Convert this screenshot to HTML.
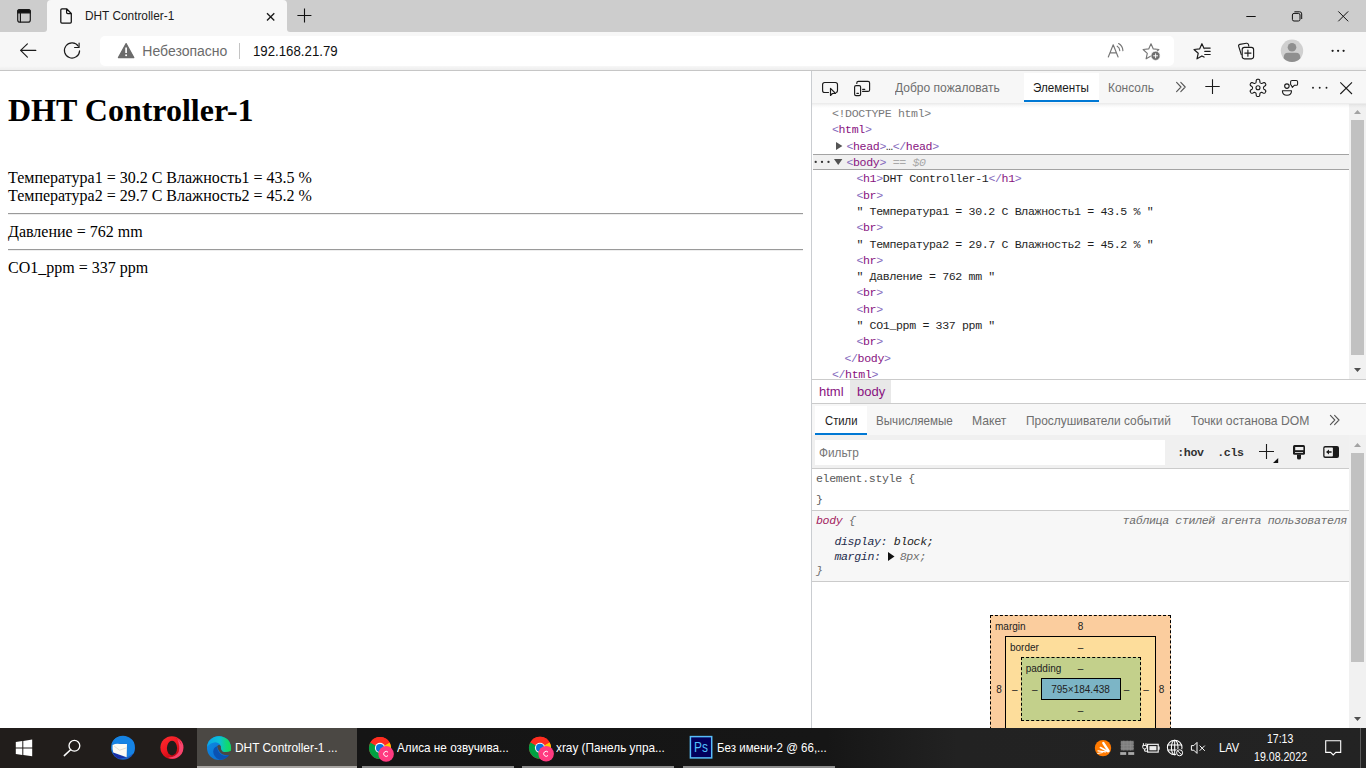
<!DOCTYPE html>
<html>
<head>
<meta charset="utf-8">
<title>DHT Controller-1</title>
<style>
*{box-sizing:border-box;margin:0;padding:0}
html,body{width:1366px;height:768px;overflow:hidden;background:#fff}
body{font-family:"Liberation Sans",sans-serif;position:relative;color:#000}
.abs{position:absolute}
svg{position:absolute;overflow:visible}
/* ---------- browser chrome ---------- */
#tabbar{left:0;top:0;width:1366px;height:32px;background:#cdcdcd}
#tab{left:47px;top:0;width:240px;height:33px;background:#f7f7f7;border-radius:4px 4px 0 0}
.foot{width:5px;height:5px;top:27px;background:#f7f7f7}
.footg{width:6px;height:7px;top:25px;background:#cdcdcd}
#tabtitle{left:84px;top:8px;font-size:12px;color:#1b1b1b;white-space:nowrap}
#toolbar{left:0;top:32px;width:1366px;height:38px;background:#f7f7f7}
#addr{left:100px;top:36px;width:1074px;height:30px;background:#fff;border-radius:5px}
#chromeline{left:0;top:70px;width:1366px;height:1px;background:#c6c6c6}
.addrtxt{top:43px;font-size:14px;white-space:nowrap}
/* ---------- page ---------- */
#page{left:0;top:71px;width:811px;height:657px;background:#fff;font-family:"Liberation Serif",serif}
#h1{left:8px;top:21px;font-size:32px;font-weight:bold;white-space:nowrap}
.pl{left:8px;font-size:16px;white-space:nowrap}
.hr{left:8px;width:795px;height:2px;border-top:1px solid #9a9a9a;border-bottom:1px solid #eee}
/* ---------- devtools ---------- */
#dt{left:811px;top:71px;width:555px;height:657px;background:#fff;border-left:1px solid #cacdd1}
#dttop{left:0;top:0;width:554px;height:32px;background:#f7f7f7}
.dttab{top:10px;font-size:13px;color:#6e6e6e;white-space:nowrap}
.mono{font-family:"Liberation Mono",monospace;font-size:11.6px;letter-spacing:-0.36px;white-space:nowrap}
.dl{left:0;height:16px;line-height:16px;color:#1e1e1e}
.tg{color:#881280}.bk{color:#8468bc}.gr{color:#7a7a7a}.gr2{color:#a8a8a8}
.stab{font-size:13px;white-space:nowrap}
.it{font-style:italic}
.bm{font-size:10px;color:#222;white-space:nowrap;line-height:12px}
/* ---------- taskbar ---------- */
#task{left:0;top:728px;width:1366px;height:40px;background:#1d1a19}
.tt{top:11px;font-size:13px;color:#fff;white-space:nowrap}
</style>
</head>
<body>
<!-- BROWSER CHROME -->
<div id="tabbar" class="abs"></div>
<div id="tab" class="abs"></div>
<div class="abs foot" style="left:43px"></div><div class="abs footg" style="left:41px;border-bottom-right-radius:3px"></div>
<div class="abs foot" style="left:286px"></div><div class="abs footg" style="left:287px;border-bottom-left-radius:3px"></div>
<div id="tabtitle" class="abs" style=";left:84.80px;margin-top:1px;transform:scaleX(0.9867);transform-origin:0 0">DHT Controller-1</div>
<div id="toolbar" class="abs"></div>
<div id="addr" class="abs"></div>
<div id="a1" class="abs addrtxt" style="left:142.30px;color:#6b6b6b;transform:scaleX(1.0000);transform-origin:0 0">Небезопасно</div>
<div class="abs" style="left:239px;top:43px;width:1px;height:16px;background:#c4c4c4"></div>
<div id="a2" class="abs addrtxt" style="left:253.25px;color:#111;transform:scaleX(0.9455);transform-origin:0 0">192.168.21.79</div>
<div class="abs" style="left:0;top:66px;width:1366px;height:4px;background:linear-gradient(to bottom,rgba(0,0,0,0),rgba(0,0,0,0.04))"></div>
<div id="chromeline" class="abs"></div>
<div class="abs" id="pstxt" style="left:694.2px;top:739px;font-size:14.5px;color:#52c0fb;white-space:nowrap;z-index:5;transform:scaleX(0.82);transform-origin:0 0">Ps</div>

<!-- PAGE -->
<div id="page" class="abs">
  <div id="h1" class="abs">DHT Controller-1</div>
  <div id="p1" class="abs pl" style="top:98px">Температура1 = 30.2 C Влажность1 = 43.5 %</div>
  <div id="p2" class="abs pl" style="top:116px">Температура2 = 29.7 C Влажность2 = 45.2 %</div>
  <div class="abs hr" style="top:142px"></div>
  <div id="p3" class="abs pl" style="top:152px">Давление = 762 mm</div>
  <div class="abs hr" style="top:178px"></div>
  <div id="p4" class="abs pl" style="top:188px">CO1_ppm = 337 ppm</div>
</div>

<!-- DEVTOOLS -->
<div id="dt" class="abs">
  <div id="dttop" class="abs"></div>
  <div class="abs" style="left:212px;top:2px;width:75px;height:29px;background:#fff;border-bottom:2px solid #0078d4"></div>
  <div id="d1" class="abs dttab" style="left:83.00px;margin-top:-1px;transform:scaleX(0.9257);transform-origin:0 0">Добро пожаловать</div>
  <div id="d2" class="abs dttab" style="left:220.80px;color:#1b1b1b;margin-top:-1px;transform:scaleX(0.8951);transform-origin:0 0">Элементы</div>
  <div id="d3" class="abs dttab" style="left:296.28px;margin-top:-1px;transform:scaleX(0.9184);transform-origin:0 0">Консоль</div>
  <div class="abs" style="left:1px;top:83px;width:536px;height:16px;background:#f0f0f0;border-top:1px solid #a3a3a3;border-bottom:1px solid #a3a3a3"></div>
  <div class="abs" style="left:-0.6px;top:34.2px;width:537px;height:273.8px;overflow:hidden" id="domtree">
  <div id="m0" class="abs mono dl" style="left:20.5px;top:1.0px"><span class="gr">&lt;!DOCTYPE html&gt;</span></div>
  <div class="abs mono dl" style="left:20.5px;top:17.3px"><span class="bk">&lt;</span><span class="tg">html</span><span class="bk">&gt;</span></div>
  <div class="abs mono dl" style="left:35px;top:33.6px"><span class="bk">&lt;</span><span class="tg">head</span><span class="bk">&gt;</span>…<span class="bk">&lt;/</span><span class="tg">head</span><span class="bk">&gt;</span></div>
  <div class="abs mono dl" style="left:35px;top:49.9px"><span class="bk">&lt;</span><span class="tg">body</span><span class="bk">&gt;</span> <span class="gr2" style="font-style:italic">== $0</span></div>
  <div class="abs mono dl" style="left:45px;top:66.2px"><span class="bk">&lt;</span><span class="tg">h1</span><span class="bk">&gt;</span>DHT Controller-1<span class="bk">&lt;/</span><span class="tg">h1</span><span class="bk">&gt;</span></div>
  <div class="abs mono dl" style="left:45px;top:82.5px"><span class="bk">&lt;</span><span class="tg">br</span><span class="bk">&gt;</span></div>
  <div class="abs mono dl" style="left:45px;top:98.8px">" Температура1 = 30.2 C Влажность1 = 43.5 % "</div>
  <div class="abs mono dl" style="left:45px;top:115.1px"><span class="bk">&lt;</span><span class="tg">br</span><span class="bk">&gt;</span></div>
  <div class="abs mono dl" style="left:45px;top:131.4px">" Температура2 = 29.7 C Влажность2 = 45.2 % "</div>
  <div class="abs mono dl" style="left:45px;top:147.7px"><span class="bk">&lt;</span><span class="tg">hr</span><span class="bk">&gt;</span></div>
  <div class="abs mono dl" style="left:45px;top:164.0px">" Давление = 762 mm "</div>
  <div class="abs mono dl" style="left:45px;top:180.3px"><span class="bk">&lt;</span><span class="tg">br</span><span class="bk">&gt;</span></div>
  <div class="abs mono dl" style="left:45px;top:196.6px"><span class="bk">&lt;</span><span class="tg">hr</span><span class="bk">&gt;</span></div>
  <div class="abs mono dl" style="left:45px;top:212.9px">" CO1_ppm = 337 ppm "</div>
  <div class="abs mono dl" style="left:45px;top:229.2px"><span class="bk">&lt;</span><span class="tg">br</span><span class="bk">&gt;</span></div>
  <div class="abs mono dl" style="left:33px;top:245.5px"><span class="bk">&lt;/</span><span class="tg">body</span><span class="bk">&gt;</span></div>
  <div class="abs mono dl" style="left:20.5px;top:261.8px"><span class="bk">&lt;/</span><span class="tg">html</span><span class="bk">&gt;</span></div>
  </div>
  <svg style="left:23.8px;top:70.9px" width="7" height="9"><path d="M0 0 L6.4 4 L0 8 Z" fill="#555"/></svg>
  <svg style="left:21.8px;top:88.1px" width="9" height="7"><path d="M0 0 L8.4 0 L4.2 6.1 Z" fill="#505050"/></svg>
  <svg style="left:0;top:0" width="20" height="100"><circle cx="3.7" cy="90.9" r="1.15" fill="#333"/><circle cx="10" cy="90.9" r="1.15" fill="#333"/><circle cx="16.5" cy="90.9" r="1.15" fill="#333"/></svg>
  <div class="abs" style="left:537px;top:33px;width:17px;height:275px;background:#f1f1f1"></div>
  <div class="abs" style="left:539px;top:49px;width:13px;height:235px;background:#c1c1c1"></div>
  <svg style="left:542px;top:39px" width="7" height="4"><path d="M0 4 L3.5 0 L7 4 Z" fill="#a3a3a3"/></svg>
  <svg style="left:542px;top:297px" width="7" height="4"><path d="M0 0 L3.5 4 L7 0 Z" fill="#505050"/></svg>
  <div class="abs" style="left:0;top:308px;width:554px;height:25px;background:#fff;border-top:1px solid #cbcbcb;border-bottom:1px solid #cbcbcb"></div>
  <div class="abs" style="left:38px;top:309px;width:41px;height:23px;background:#e8e8e8"></div>
  <div id="c1" class="abs" style="left:7px;top:313px;font-size:13px;color:#881280">html</div>
  <div id="c2" class="abs" style="left:45px;top:313px;font-size:13px;color:#881280">body</div>
  <div class="abs" style="left:0;top:333px;width:554px;height:31px;background:#f7f7f7"></div><div class="abs" style="left:3px;top:335.3px;width:52px;height:29px;background:#fff"></div>
  <div class="abs" style="left:3px;top:362px;width:52px;height:2px;background:#0078d4"></div>
  <div id="s1" class="abs stab" style="left:12.90px;top:342px;color:#1b1b1b;transform:scaleX(0.8676);transform-origin:0 0">Стили</div>
  <div id="s2" class="abs stab" style="left:64.11px;top:342px;color:#6e6e6e;transform:scaleX(0.8941);transform-origin:0 0">Вычисляемые</div>
  <div id="s3" class="abs stab" style="left:160.06px;top:342px;color:#6e6e6e;transform:scaleX(0.9361);transform-origin:0 0">Макет</div>
  <div id="s4" class="abs stab" style="left:214.08px;top:342px;color:#6e6e6e;transform:scaleX(0.9172);transform-origin:0 0">Прослушиватели событий</div>
  <div id="s5" class="abs stab" style="left:378.97px;top:342px;color:#6e6e6e;transform:scaleX(0.9373);transform-origin:0 0">Точки останова DOM</div>
  <div class="abs" style="left:0;top:364px;width:537px;height:34px;background:#f0f0f0;border-bottom:1px solid #cbcbcb"></div>
  <div class="abs" style="left:3px;top:368.5px;width:350px;height:25px;background:#fff"></div>
  <div id="f1" class="abs" style="left:7.00px;top:374.00px;font-size:13px;color:#767676;transform:scaleX(0.9091);transform-origin:0 0">Фильтр</div>
  <div class="abs mono" style="left:365.2px;top:375px;font-weight:bold;color:#303030">:hov</div>
  <div class="abs mono" style="left:405.2px;top:375px;font-weight:bold;color:#303030">.cls</div>
  <div id="m1" class="abs mono" style="left:4px;top:401px;color:#5a5a5a">element.style {</div>
  <div id="m2" class="abs mono" style="left:4px;top:422px;color:#5a5a5a">}</div>
  <div class="abs" style="left:0;top:439px;width:537px;height:72px;background:#f7f7f7;border-top:1px solid #cbcbcb;border-bottom:1px solid #cbcbcb"></div>
  <div id="m3" class="abs mono it" style="left:4px;top:443px"><span style="color:#a31c5e">body</span> <span style="color:#6e6e6e">{</span></div>
  <div id="m7" class="abs mono it" style="left:310.6px;top:443px;color:#6e6e6e">таблица стилей агента пользователя</div>
  <div id="m4" class="abs mono it" style="left:22.4px;top:463.5px;color:#1f2d4d">display: <span style="color:#222">block;</span></div>
  <div id="m5" class="abs mono it" style="left:22.4px;top:479px;color:#1f2d4d">margin: <span style="color:#6e6e6e;margin-left:12.5px">8px;</span></div>
  <svg style="left:75.5px;top:481px" width="7" height="9"><path d="M0 0 L6.5 4.5 L0 9 Z" fill="#111"/></svg>
  <div id="m6" class="abs mono it" style="left:4px;top:492.5px;color:#6e6e6e">}</div>
  <div class="abs" style="left:537px;top:364px;width:17px;height:293px;background:#f1f1f1"></div>
  <div class="abs" style="left:539px;top:382px;width:13px;height:209px;background:#c1c1c1"></div>
  <svg style="left:542px;top:372px" width="7" height="4"><path d="M0 4 L3.5 0 L7 4 Z" fill="#a3a3a3"/></svg>
  <svg style="left:542px;top:646px" width="7" height="4"><path d="M0 0 L3.5 4 L7 0 Z" fill="#505050"/></svg>
  <div class="abs" style="left:178px;top:544px;width:181px;height:130px;background:#fbcd9e;border:1px dashed #000"></div>
  <div class="abs" style="left:193px;top:565px;width:151px;height:110px;background:#fddd9b;border:1px solid #000"></div>
  <div class="abs" style="left:208.5px;top:586px;width:120.5px;height:64px;background:#c3d08b;border:1px dashed #000"></div>
  <div class="abs" style="left:228.5px;top:607px;width:80px;height:22px;background:#7cb5c6;border:1px solid #000"></div>
  <div class="abs bm" style="left:183px;top:550.3px">margin</div>
  <div class="abs bm" style="left:228.5px;top:550.3px;width:80px;text-align:center">8</div>
  <div class="abs bm" style="left:198px;top:571.0px">border</div>
  <div class="abs bm" style="left:228.5px;top:571.0px;width:80px;text-align:center">–</div>
  <div class="abs bm" style="left:213.7px;top:592.2px">padding</div>
  <div class="abs bm" style="left:228.5px;top:592.2px;width:80px;text-align:center">–</div>
  <div class="abs bm" style="left:228.5px;top:613.0px;width:80px;text-align:center">795×184.438</div>
  <div class="abs bm" style="left:228.5px;top:634.0px;width:80px;text-align:center">–</div>
  <div class="abs bm" style="left:147px;top:613.0px;width:80px;text-align:center">8</div>
  <div class="abs bm" style="left:162.7px;top:613.0px;width:80px;text-align:center">–</div>
  <div class="abs bm" style="left:182.7px;top:613.0px;width:80px;text-align:center">–</div>
  <div class="abs bm" style="left:274.6px;top:613.0px;width:80px;text-align:center">–</div>
  <div class="abs bm" style="left:294px;top:613.0px;width:80px;text-align:center">–</div>
  <div class="abs bm" style="left:309.6px;top:613.0px;width:80px;text-align:center">8</div>
  <div class="abs" style="left:0;top:32px;width:554px;height:5px;background:linear-gradient(to bottom,rgba(0,0,0,0.085),rgba(0,0,0,0.03) 50%,rgba(0,0,0,0))"></div>
  <!--DT-ICONS-->
</div>

<!-- TASKBAR -->
<div id="task" class="abs">
  
  <div class="abs" style="left:0;top:0;width:197px;height:40px;background:#211d1b"></div>
  <div class="abs" style="left:197px;top:0;width:160px;height:40px;background:#4b4844"></div>
  <div class="abs" style="left:357px;top:0;width:1009px;height:40px;background:linear-gradient(to right,#151515 0,#161616 470px,#222 600px,#232323 100%)"></div>
  <div class="abs" style="left:197px;top:38px;width:160px;height:2px;background:#a9a6a3"></div>
  <div class="abs" style="left:362px;top:38px;width:152px;height:2px;background:#8d8d8d"></div>
  <div class="abs" style="left:522px;top:38px;width:152px;height:2px;background:#8d8d8d"></div>
  <div class="abs" style="left:683px;top:38px;width:152px;height:2px;background:#8d8d8d"></div>
  <div class="abs" style="left:1360px;top:0;width:1px;height:40px;background:#5a5a5a"></div>
  <div id="t1" class="abs tt" style="left:235.04px;margin-top:1px;transform:scaleX(0.9126);transform-origin:0 0">DHT Controller-1 ...</div>
  <div id="t2" class="abs tt" style="left:397.00px;margin-top:1px;transform:scaleX(0.9024);transform-origin:0 0">Алиса не озвучива...</div>
  <div id="t3" class="abs tt" style="left:555.90px;margin-top:1px;transform:scaleX(0.9084);transform-origin:0 0">xray (Панель упра...</div>
  <div id="t4" class="abs tt" style="left:717.00px;margin-top:1px;transform:scaleX(0.8862);transform-origin:0 0">Без имени-2 @ 66,...</div>
  <div id="t5" class="abs tt" style="left:1219.46px;font-size:12px;top:12.5px;transform:scaleX(0.9286);transform-origin:0 0">LAV</div>
  <div id="t6" class="abs tt" style="left:1266.63px;font-size:12px;top:3.7px;transform:scaleX(0.8733);transform-origin:0 0">17:13</div>
  <div id="t7" class="abs tt" style="left:1254.00px;font-size:12px;top:21.7px;transform:scaleX(0.8833);transform-origin:0 0">19.08.2022</div>

</div>

<!-- ICON OVERLAY (page coordinates) -->
<svg id="ov" style="left:0;top:0" width="1366" height="768" viewBox="0 0 1366 768" fill="none">

<g id="chrome-icons" stroke="#1b1b1b" stroke-width="1.2" stroke-linecap="round" stroke-linejoin="round">
  <!-- tab actions -->
  <rect x="17.7" y="9.7" width="12.6" height="12.4" rx="2.2"/>
  <path d="M17.7 12.9 V11.9 Q17.7 9.7 19.9 9.7 H28.1 Q30.3 9.7 30.3 11.9 V12.9 Z" fill="#111"/>
  <path d="M20.4 12.9 V22"/>
  <!-- page icon -->
  <path d="M66.6 8.8 H61.9 Q60.8 8.8 60.8 9.9 V22 Q60.8 23.1 61.9 23.1 H70.2 Q71.3 23.1 71.3 22 V13.5 Z M66.6 8.8 V12.4 Q66.6 13.5 67.7 13.5 H71.3" stroke="#111" stroke-width="1.25"/>
  <!-- tab close -->
  <path d="M267 13.2 L274.3 20.4 M274.3 13.2 L267 20.4" stroke-width="1.35" stroke-linecap="butt"/>
  <!-- new tab plus -->
  <path d="M297.4 15.5 H311.4 M304.5 8.6 V22.6" stroke="#111" stroke-width="1.1" stroke-linecap="butt"/>
  <!-- back -->
  <path d="M20.6 50.4 H35.8 M27.4 43.8 L20.6 50.4 L27.4 57.2" stroke-width="1.15"/>
  <!-- refresh -->
  <path d="M78.3 46.2 A7.6 7.6 0 1 0 79.6 50.9" stroke-width="1.15"/>
  <path d="M79.1 43.1 V47.5 H74.6" stroke-width="1.15"/>
  <!-- warning -->
  <path d="M126.1 43.6 L133.8 57.6 H118.4 Z" fill="#6b6b6b" stroke="#6b6b6b" stroke-width="1.2"/>
  <path d="M126.1 47.6 V53" stroke="#fff" stroke-width="1.7" stroke-linecap="butt"/>
  <circle cx="126.1" cy="55.3" r="1" fill="#fff" stroke="none"/>
  <!-- read aloud -->
  <g stroke="#767676" stroke-width="1.15">
    <path d="M1108.3 57 L1113.2 44.8 L1118.1 57 M1110 52.8 H1116.4"/>
    <path d="M1117.2 46.2 Q1119.6 47.6 1119.8 50.6 M1118.6 43.6 Q1122.6 45.8 1122.9 50.6"/>
  </g>
  <!-- add favourite -->
  <path d="M1151.00 43.80 L1153.29 48.94 L1158.89 49.54 L1154.71 53.31 L1155.88 58.81 L1151.00 56.00 L1146.12 58.81 L1147.29 53.31 L1143.11 49.54 L1148.71 48.94 Z" stroke="#767676" stroke-width="1.15"/>
  <circle cx="1155.6" cy="55.8" r="4.6" fill="#6e6e6e" stroke="#fff" stroke-width="0.7"/>
  <path d="M1153.2 55.8 H1158 M1155.6 53.4 V58.2" stroke="#fff" stroke-width="0.95" stroke-linecap="butt"/>
  <!-- favourites -->
  <path d="M1204.1 48.6 L1201.9 43.7 L1199.6 48.9 L1194 49.5 L1198.2 53.3 L1197 58.8 L1201.9 55.9 L1204 57.1" stroke-width="1.2"/>
  <path d="M1204.7 48.1 H1210.2 M1204.7 51.3 H1210.2 M1204.7 54.5 H1210.2" stroke-width="1.15"/>
  <!-- collections -->
  <path d="M1241.3 54.6 L1238.7 46.4 Q1238.2 44.8 1239.8 44.4 L1246.4 43.3 Q1248 43 1248.5 44.6 L1248.8 46.2" stroke-width="1.15"/>
  <rect x="1242.2" y="47.4" width="11.4" height="11.4" rx="2.2" stroke-width="1.15"/>
  <path d="M1244.8 53.1 H1251 M1247.9 50 V56.2" stroke-width="1.15"/>
  <!-- profile -->
  <g stroke="none">
    <circle cx="1292" cy="50.8" r="11.2" fill="#d0d0d0"/>
    <circle cx="1292" cy="47.2" r="4.3" fill="#8f8f8f"/>
    <path d="M1283.6 58.2 Q1283.6 52.8 1288 52.8 H1296 Q1300.4 52.8 1300.4 58.2 Q1296.8 62 1292 62 Q1287.2 62 1283.6 58.2 Z" fill="#8f8f8f"/>
  </g>
  <!-- menu dots -->
  <g fill="#1b1b1b" stroke="none"><circle cx="1332.6" cy="50.8" r="1.15"/><circle cx="1338.1" cy="50.8" r="1.15"/><circle cx="1343.6" cy="50.8" r="1.15"/></g>
  <!-- window controls -->
  <g stroke-width="1" stroke-linecap="butt" stroke="#111">
    <path d="M1246.3 16.5 H1255.7"/>
    <rect x="1292.4" y="13.4" width="7.6" height="7.6" rx="1.6"/>
    <path d="M1294.4 11.8 H1299.6 Q1301.7 11.8 1301.7 13.9 V19"/>
    <path d="M1338.3 11.4 L1348.2 21.3 M1348.2 11.4 L1338.3 21.3"/>
  </g>
</g>

<g id="task-icons">
  <!-- windows logo -->
  <g fill="#fff">
    <path d="M15.8 742 L22.3 741.1 V747.5 H15.8 Z"/>
    <path d="M23.3 740.9 L32.2 739.6 V747.5 H23.3 Z"/>
    <path d="M15.8 748.5 H22.3 V754.9 L15.8 754 Z"/>
    <path d="M23.3 748.5 H32.2 V756.3 L23.3 755.1 Z"/>
  </g>
  <!-- search -->
  <circle cx="74.4" cy="745.8" r="5.4" stroke="#fff" stroke-width="1.3"/>
  <path d="M70.6 749.8 L64.3 755.6" stroke="#fff" stroke-width="1.5" stroke-linecap="round"/>
  <!-- thunderbird -->
  <defs>
    <linearGradient id="tbg" x1="0" y1="0" x2="1" y2="1"><stop offset="0" stop-color="#1b8fe6"/><stop offset="1" stop-color="#1a4fb8"/></linearGradient>
    <linearGradient id="edg1" x1="0" y1="0" x2="1" y2="0"><stop offset="0" stop-color="#1da0d8"/><stop offset="0.55" stop-color="#27bfa5"/><stop offset="1" stop-color="#3ed15d"/></linearGradient>
    <linearGradient id="edg2" x1="0" y1="0" x2="0" y2="1"><stop offset="0" stop-color="#1a7fd4"/><stop offset="1" stop-color="#0d4fae"/></linearGradient>
  </defs>
  <circle cx="123" cy="747.7" r="12" fill="url(#tbg)"/>
  <path d="M111.6 744 Q114 737 121 735.9 Q130 735.6 134 742.5 Q135.6 748 134 753 L127.2 757.6 L127 744 Q120 742.4 111.6 744 Z" fill="#1583e4"/>
  <path d="M112.4 751.5 Q114 757 119 758.8 L126 757.6 L113.3 752.5 Z" fill="#1a2fa6"/>
  <path d="M112.6 744.9 Q116 743.2 120 744 L127 744 L126.7 757.3 L113.3 752.6 Q112.2 748.6 112.6 744.9 Z" fill="#fbfaf3"/>
  <path d="M114.2 746.2 L119.6 750.2 L126.6 747.8" stroke="#d9d6cb" stroke-width="0.8" fill="none"/>
  <!-- opera -->
  <defs><linearGradient id="opg" x1="0" y1="0" x2="0.6" y2="1"><stop offset="0" stop-color="#ff2d2f"/><stop offset="0.55" stop-color="#f01822"/><stop offset="1" stop-color="#b8060e"/></linearGradient></defs>
  <ellipse cx="171.9" cy="747.6" rx="11.5" ry="11.4" fill="url(#opg)"/>
  <path d="M177 738.2 Q183.6 741 183.4 747.6 Q183.4 755 176.4 758 Q171.5 759.6 168 757.4 Q175 758 178.6 752 Q180.4 746 177 738.2 Z" fill="#ff4f7e" opacity="0.85"/>
  <path d="M175.5 737.6 Q180.6 740.4 181.6 745 Q179.6 740.4 175.5 737.6 Z" fill="#c40a12"/>
  <ellipse cx="172" cy="748.1" rx="5.1" ry="7.3" fill="#211d1b"/>
  <!-- edge -->
  <defs>
    <linearGradient id="edA" x1="0" y1="0" x2="1" y2="0"><stop offset="0" stop-color="#0aa6e8"/><stop offset="0.5" stop-color="#0cc0d8"/><stop offset="0.8" stop-color="#10d67a"/><stop offset="1" stop-color="#12dc5c"/></linearGradient>
    <linearGradient id="edB" x1="0" y1="0" x2="1" y2="1"><stop offset="0" stop-color="#0e8ee4"/><stop offset="1" stop-color="#0a66cc"/></linearGradient>
  </defs>
  <circle cx="219" cy="748" r="12" fill="url(#edB)"/>
  <path d="M217.1 746.4 Q218.8 743.8 220.9 746 Q220.4 749.6 222.6 751.6 L231.2 750.6 Q231 753.6 229.4 755.2 Q225.6 755.8 222.4 754.2 Q218.6 752 217.1 746.4 Z" fill="#4b4844"/>
  <path d="M207.1 746.8 Q207.6 739.6 214.4 736.9 Q222 734.6 228 739.8 Q231.6 744 231 750.8 Q227.4 752.6 223.2 751.8 Q220.6 750 220.9 746 Q219.4 742.8 215.6 742.3 Q210.4 742.6 207.1 746.8 Z" fill="url(#edA)"/>
  <path d="M217.1 746.3 Q213.6 747.4 213.2 751.4 Q213.4 756.8 219.4 759.8 Q225.6 760 229.3 755 Q224.8 756.6 221.2 754.4 Q217.4 751.6 217.1 746.3 Z" fill="#0a52b2"/>
  <!-- chrome 1 -->
  <g transform="translate(380 747.9)">
    <circle cx="0" cy="0" r="11" fill="#ff2d20"/>
    <path d="M0 0 L-9.53 -5.5 A11 11 0 0 0 0 11 Z" fill="#00a142"/>
    <path d="M0 0 L0 11 A11 11 0 0 0 9.53 -5.5 Z" fill="#ffc700"/>
    <path d="M0 0 L-9.53 -5.5 A11 11 0 0 1 9.53 -5.5 Z" fill="#ff2d20"/>
    <circle cx="0" cy="0" r="5.1" fill="#f7f7f7"/>
    <circle cx="0" cy="0" r="4" fill="#0b72e0"/>
    <circle cx="6.1" cy="6" r="7.8" fill="#ff3a80"/>
    <path d="M8 4.3 A2.5 2.5 0 1 0 8 7.7" stroke="#fff" stroke-width="1" fill="none"/>
  </g>
  <g transform="translate(540 747.8)">
    <circle cx="0" cy="0" r="11" fill="#ff2d20"/>
    <path d="M0 0 L-9.53 -5.5 A11 11 0 0 0 0 11 Z" fill="#00a142"/>
    <path d="M0 0 L0 11 A11 11 0 0 0 9.53 -5.5 Z" fill="#ffc700"/>
    <path d="M0 0 L-9.53 -5.5 A11 11 0 0 1 9.53 -5.5 Z" fill="#ff2d20"/>
    <circle cx="0" cy="0" r="5.1" fill="#f7f7f7"/>
    <circle cx="0" cy="0" r="4" fill="#0b72e0"/>
    <circle cx="6.1" cy="6" r="7.8" fill="#ff3a80"/>
    <path d="M8 4.3 A2.5 2.5 0 1 0 8 7.7" stroke="#fff" stroke-width="1" fill="none"/>
  </g>
  <!-- photoshop -->
  <rect x="690.4" y="736.6" width="21.3" height="21.3" fill="#02005c" stroke="#58bdfa" stroke-width="1.5"/>
  <!-- avast -->
  <circle cx="1103" cy="748.1" r="8.2" fill="#ff7a00"/>
  <g stroke="#fff" stroke-linecap="round" fill="none">
    <path d="M1103.3 743 L1108.6 751" stroke-width="2.3"/>
    <path d="M1100.4 747.6 L1107.8 751.6" stroke-width="1.7"/>
    <path d="M1098 750.8 L1105.5 751.9" stroke-width="1.3"/>
    <path d="M1097.8 753.4 L1102.4 752.6" stroke-width="1"/>
  </g>
  <!-- pc/network -->
  <rect x="1120.4" y="740.4" width="13.6" height="10.4" fill="#7c7c7c" stroke="#2a2a2a" stroke-width="0.8"/>
  <path d="M1120.6 742.9 H1134 M1120.6 745.6 H1134 M1120.6 748.3 H1134 M1123.8 740.6 V750.6 M1127.2 740.6 V750.6 M1130.6 740.6 V750.6" stroke="#8e8e8e" stroke-width="0.6"/>
  <rect x="1120.2" y="752.1" width="6" height="2.8" fill="#a9a9a9"/><rect x="1128.2" y="752.1" width="6" height="2.8" fill="#a9a9a9"/>
  <!-- battery -->
  <rect x="1147.6" y="744.3" width="10.6" height="7.8" stroke="#fff" stroke-width="1.1"/>
  <path d="M1159 746.6 V749.8" stroke="#fff" stroke-width="1.2"/>
  <rect x="1149.4" y="746.1" width="7" height="4.2" fill="#ededed"/>
  <path d="M1143.4 743.2 V745.2 M1146 743.2 V745.2 M1142.8 745.4 H1146.6 V747.6 Q1146.6 749 1144.7 749 Q1142.8 749 1142.8 747.6 Z M1144.7 749 V751.2 H1147.4" stroke="#fff" stroke-width="1" fill="none"/>
  <!-- globe -->
  <g stroke="#fff" stroke-width="1.05" fill="none">
    <circle cx="1174.7" cy="747.5" r="7.3"/>
    <ellipse cx="1174.7" cy="747.5" rx="3.3" ry="7.3"/>
    <path d="M1167.6 745 H1181.8 M1167.6 750 H1181.8 M1174.7 740.2 V754.8"/>
  </g>
  <circle cx="1179.6" cy="752.8" r="4" fill="#222"/>
  <circle cx="1179.6" cy="752.8" r="3" stroke="#fff" stroke-width="1" fill="none"/>
  <path d="M1177.6 750.8 L1181.6 754.8" stroke="#fff" stroke-width="1"/>
  <!-- volume muted -->
  <path d="M1191.4 745.6 H1193.8 L1197 742.4 V753.4 L1193.8 750.2 H1191.4 Z" stroke="#fff" stroke-width="1" fill="none" stroke-linejoin="round"/>
  <path d="M1199.6 745.6 L1204.8 750.8 M1204.8 745.6 L1199.6 750.8" stroke="#fff" stroke-width="1"/>
  <!-- notification -->
  <path d="M1325.7 740.8 H1340.7 V752.4 H1335.8 L1333.2 755 L1330.6 752.4 H1325.7 Z" stroke="#fff" stroke-width="1.1" fill="none"/>
</g>
<g id="dt-icons" stroke="#1b1b1b" stroke-width="1.15" stroke-linecap="round" stroke-linejoin="round">
  <!-- inspect -->
  <path d="M828.5 92.5 H824.7 Q822.6 92.5 822.6 90.4 V84.6 Q822.6 82.5 824.7 82.5 H835.4 Q837.5 82.5 837.5 84.6 V90.4 Q837.5 92 836.3 92.4"/>
  <path d="M830.5 88.3 V95.5 L832.4 93.5 H835.6 Z"/>
  <!-- device -->
  <rect x="854.6" y="85.6" width="6" height="10" rx="1.4"/>
  <path d="M856.8 83.4 V82.9 Q856.8 81.3 858.4 81.3 H868 Q869.6 81.3 869.6 82.9 V89.9 Q869.6 91.4 868 91.4 H862.6"/>
  <path d="M856.9 93.4 H858.4 M862.6 89.3 H864.8"/>
  <!-- chevrons -->
  <path d="M1176.6 82.4 L1181 87 L1176.6 91.6 M1180.8 82.4 L1185.2 87 L1180.8 91.6" stroke="#555" stroke-width="1.1"/>
  <!-- plus -->
  <path d="M1205.3 86.5 H1219.7 M1212.5 79.2 V94" stroke-width="1.1" stroke-linecap="butt"/>
  <!-- gear -->
  <path id="gear" d="M1263.50 87.90 L1263.50 88.14 L1263.51 88.38 L1263.55 88.63 L1263.69 88.90 L1264.08 89.25 L1264.81 89.72 L1265.50 90.27 L1265.82 90.75 L1265.86 91.15 L1265.77 91.52 L1265.62 91.87 L1265.45 92.20 L1265.25 92.52 L1265.02 92.82 L1264.75 93.08 L1264.37 93.25 L1263.80 93.22 L1262.99 92.89 L1262.21 92.49 L1261.71 92.33 L1261.41 92.34 L1261.17 92.43 L1260.96 92.54 L1260.75 92.66 L1260.54 92.78 L1260.34 92.91 L1260.14 93.07 L1259.98 93.33 L1259.87 93.84 L1259.82 94.71 L1259.70 95.58 L1259.45 96.10 L1259.11 96.33 L1258.75 96.44 L1258.37 96.49 L1258.00 96.50 L1257.63 96.49 L1257.25 96.44 L1256.89 96.33 L1256.55 96.10 L1256.30 95.58 L1256.18 94.71 L1256.13 93.84 L1256.02 93.33 L1255.86 93.07 L1255.66 92.91 L1255.46 92.78 L1255.25 92.66 L1255.04 92.54 L1254.83 92.43 L1254.59 92.34 L1254.29 92.33 L1253.79 92.49 L1253.01 92.89 L1252.20 93.22 L1251.63 93.25 L1251.25 93.08 L1250.98 92.82 L1250.75 92.52 L1250.55 92.20 L1250.38 91.87 L1250.23 91.52 L1250.14 91.15 L1250.18 90.75 L1250.50 90.27 L1251.19 89.72 L1251.92 89.25 L1252.31 88.90 L1252.45 88.63 L1252.49 88.38 L1252.50 88.14 L1252.50 87.90 L1252.50 87.66 L1252.49 87.42 L1252.45 87.17 L1252.31 86.90 L1251.92 86.55 L1251.19 86.08 L1250.50 85.53 L1250.18 85.05 L1250.14 84.65 L1250.23 84.28 L1250.38 83.93 L1250.55 83.60 L1250.75 83.28 L1250.98 82.98 L1251.25 82.72 L1251.63 82.55 L1252.20 82.58 L1253.01 82.91 L1253.79 83.31 L1254.29 83.47 L1254.59 83.46 L1254.83 83.37 L1255.04 83.26 L1255.25 83.14 L1255.46 83.02 L1255.66 82.89 L1255.86 82.73 L1256.02 82.47 L1256.13 81.96 L1256.18 81.09 L1256.30 80.22 L1256.55 79.70 L1256.89 79.47 L1257.25 79.36 L1257.63 79.31 L1258.00 79.30 L1258.37 79.31 L1258.75 79.36 L1259.11 79.47 L1259.45 79.70 L1259.70 80.22 L1259.82 81.09 L1259.87 81.96 L1259.98 82.47 L1260.14 82.73 L1260.34 82.89 L1260.54 83.02 L1260.75 83.14 L1260.96 83.26 L1261.17 83.37 L1261.41 83.46 L1261.71 83.47 L1262.21 83.31 L1262.99 82.91 L1263.80 82.58 L1264.37 82.55 L1264.75 82.72 L1265.02 82.98 L1265.25 83.28 L1265.45 83.60 L1265.62 83.93 L1265.77 84.28 L1265.86 84.65 L1265.82 85.05 L1265.50 85.53 L1264.81 86.08 L1264.08 86.55 L1263.69 86.90 L1263.55 87.17 L1263.51 87.42 L1263.50 87.66 Z" stroke-width="1.1"/>
  <circle cx="1258" cy="87.8" r="2" stroke-width="1.1"/>
  <!-- feedback -->
  <circle cx="1286.9" cy="86.1" r="2.25" stroke-width="1.1"/>
  <path d="M1282.4 90.7 H1291.5 Q1291.5 95.3 1286.95 95.3 Q1282.4 95.3 1282.4 90.7 Z" stroke-width="1.1"/>
  <path d="M1290.6 84.2 V81.8 Q1290.6 80.4 1292 80.4 H1296.2 Q1297.6 80.4 1297.6 81.8 V83.9 Q1297.6 85.3 1296.2 85.3 H1294.3 L1292.3 87.4 L1291.3 85.2 Q1290.6 85 1290.6 84.2 Z" stroke-width="1.05"/>
  <!-- dots -->
  <g fill="#1b1b1b" stroke="none"><circle cx="1313" cy="87.8" r="0.95"/><circle cx="1319.7" cy="87.8" r="0.95"/><circle cx="1326.5" cy="87.8" r="0.95"/></g>
  <!-- close -->
  <path d="M1340.3 82.3 L1352 94 M1352 82.3 L1340.3 94" stroke-width="1.1" stroke-linecap="butt"/>
  <!-- styles: chevrons -->
  <path d="M1330.4 415.4 L1334.8 420 L1330.4 424.6 M1334.6 415.4 L1339 420 L1334.6 424.6" stroke="#555" stroke-width="1.1"/>
  <!-- styles: plus w/ triangle -->
  <path d="M1259 451.5 H1274 M1266.5 444 V459" stroke-width="1.1" stroke-linecap="butt"/>
  <path d="M1278.2 458 V463 H1273 Z" fill="#111" stroke="none"/>
  <!-- styles: paint -->
  <g stroke="none">
    <rect x="1293" y="445" width="12" height="9.8" rx="1.5" fill="#1b1b1b"/>
    <rect x="1295.2" y="447" width="8.2" height="3.2" fill="#eee"/>
    <rect x="1295" y="452.1" width="8" height="0.9" fill="#ddd"/>
    <path d="M1297 454.6 H1301 V458 Q1301 459.5 1299 459.5 Q1297 459.5 1297 458 Z" fill="#1b1b1b"/>
  </g>
  <!-- styles: sidebar -->
  <g stroke="none">
    <rect x="1323.2" y="446.1" width="15.8" height="11.8" rx="2" fill="#1b1b1b"/>
    <rect x="1324.5" y="447.4" width="8.4" height="9.2" rx="0.8" fill="#f0f0f0"/>
    <path d="M1326 452 L1329 449.6 V451.3 H1331.6 V452.7 H1329 V454.4 Z" fill="#1b1b1b"/>
  </g>
</g>
</svg>
</body>
</html>
